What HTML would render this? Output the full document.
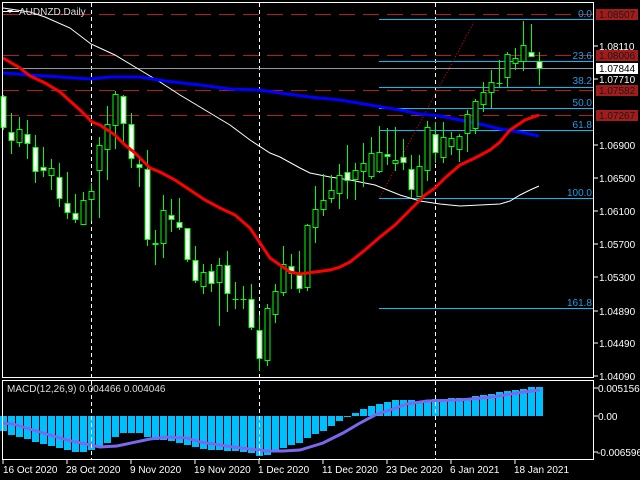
<!DOCTYPE html>
<html><head><meta charset="utf-8"><style>
html,body{margin:0;padding:0;background:#000;width:640px;height:480px;overflow:hidden}
svg{display:block}
text{font-family:"Liberation Sans",sans-serif;font-size:10px}
</style></head><body>
<svg id="s" width="640" height="480" xmlns="http://www.w3.org/2000/svg">
<rect width="640" height="480" fill="#000"/>
<g id="g"></g>
<!-- frames -->
<rect x="2.5" y="2.5" width="591" height="375" fill="none" stroke="#fff"/>
<rect x="2.5" y="380.5" width="591" height="79" fill="none" stroke="#fff"/>
<!-- title -->
<line x1="3" y1="11.5" x2="19" y2="11.5" stroke="#fff"/>
<path d="M7 10 L13 10 L10 13 Z" fill="#fff"/>
<text x="19" y="15" fill="#ddd" font-size="11">AUDNZD.Daily</text>
<!-- fib labels -->
<g fill="#1e9fe6" text-anchor="end" font-size="10">
<text x="592" y="17">0.0</text>
<text x="592" y="59">23.6</text>
<text x="592" y="84">38.2</text>
<text x="592" y="106">50.0</text>
<text x="592" y="128">61.8</text>
<text x="592" y="196">100.0</text>
<text x="592" y="306">161.8</text>
</g>
<!-- axis -->
<g stroke="#fff">
<line x1="594" y1="46" x2="598" y2="46"/><line x1="594" y1="79" x2="598" y2="79"/>
<line x1="594" y1="145" x2="598" y2="145"/><line x1="594" y1="178" x2="598" y2="178"/>
<line x1="594" y1="211" x2="598" y2="211"/><line x1="594" y1="244" x2="598" y2="244"/>
<line x1="594" y1="277" x2="598" y2="277"/><line x1="594" y1="311" x2="598" y2="311"/>
<line x1="594" y1="343" x2="598" y2="343"/><line x1="594" y1="376" x2="598" y2="376"/>
<line x1="594" y1="388" x2="598" y2="388"/><line x1="594" y1="416" x2="598" y2="416"/>
<line x1="594" y1="452" x2="598" y2="452"/>
</g>
<g fill="#fff" font-size="10">
<text x="599" y="50">1.08110</text><text x="599" y="83">1.07710</text>
<text x="599" y="149">1.06900</text><text x="599" y="182">1.06500</text>
<text x="599" y="215">1.06100</text><text x="599" y="248">1.05700</text>
<text x="599" y="281">1.05300</text><text x="599" y="315">1.04890</text>
<text x="599" y="347">1.04490</text><text x="599" y="380">1.04090</text>
<text x="598" y="392">0.005156</text><text x="598" y="420">0.00</text>
<text x="597" y="456">-0.006596</text>
</g>
<g font-size="10">
<rect x="596" y="9" width="42" height="11" fill="#a31c1c"/><text x="599" y="18" fill="#1a1a1a">1.08507</text>
<rect x="596" y="50" width="42" height="11" fill="#a31c1c"/><text x="599" y="59" fill="#1a1a1a">1.08006</text>
<rect x="596" y="63" width="42" height="11" fill="#fff"/><text x="599" y="72" fill="#000">1.07844</text>
<rect x="596" y="85" width="42" height="11" fill="#a31c1c"/><text x="599" y="94" fill="#1a1a1a">1.07582</text>
<rect x="596" y="110" width="42" height="11" fill="#a31c1c"/><text x="599" y="119" fill="#1a1a1a">1.07267</text>
</g>
<!-- date axis -->
<g stroke="#fff">
<line x1="3" y1="460" x2="3" y2="464"/><line x1="67" y1="460" x2="67" y2="464"/>
<line x1="131" y1="460" x2="131" y2="464"/><line x1="195" y1="460" x2="195" y2="464"/>
<line x1="259" y1="460" x2="259" y2="464"/><line x1="323" y1="460" x2="323" y2="464"/>
<line x1="387" y1="460" x2="387" y2="464"/><line x1="451" y1="460" x2="451" y2="464"/>
<line x1="515" y1="460" x2="515" y2="464"/>
</g>
<g fill="#fff" font-size="10">
<text x="3" y="473">16 Oct 2020</text><text x="66" y="473">28 Oct 2020</text>
<text x="130" y="473">9 Nov 2020</text><text x="194" y="473">19 Nov 2020</text>
<text x="258" y="473">1 Dec 2020</text><text x="322" y="473">11 Dec 2020</text>
<text x="386" y="473">23 Dec 2020</text><text x="450" y="473">6 Jan 2021</text>
<text x="514" y="473">18 Jan 2021</text>
</g>
<text x="7" y="392" fill="#ddd" font-size="10">MACD(12,26,9) 0.004466 0.004046</text>
</svg>
<script>
var g=document.getElementById('g'),NS='http://www.w3.org/2000/svg';
function el(t,a){var e=document.createElementNS(NS,t);for(var k in a)e.setAttribute(k,a[k]);g.appendChild(e);return e;}
function pl(pts,c,w,extra){var a={points:pts.map(function(p){return p.join(',')}).join(' '),fill:'none',stroke:c,'stroke-width':w};for(var k in extra)a[k]=extra[k];el('polyline',a);}
// macd histogram
var hb=[431,435,437,439,442,444,446,448,450,452,452,450,446,443,437,433,433,433,437,440,440,441,443,445,447,449,450,450,451,451,452,453,456,455,452,448,445,443,438,434,431,426,421,417,413,409,406,404,402,400,400,400,401,401,399,399,398,398,398,396,395,394,392,391,390,389,387,387];
hb.forEach(function(v,k){var x=Math.round(3.3+8*k)-3;var y0=416;if(v>y0)el('rect',{x:x,y:y0,width:7,height:v-y0,fill:'#00bfff'});else el('rect',{x:x,y:v,width:7,height:y0-v,fill:'#00bfff'});});
pl([[3,423],[13,424],[33,430],[67,440],[100,447],[117,446],[150,439],[167,437],[187,438],[200,442],[233,447],[267,451],[283,451],[300,450],[310,447],[323,443],[343,433],[360,423],[377,414],[393,409],[407,404],[427,401],[460,400],[493,397],[517,393],[540,390]],'#7b68ee',3);
// vertical dashed
[91.5,259.5,435.5].forEach(function(x){el('line',{x1:x,y1:3,x2:x,y2:460,stroke:'#fff','stroke-dasharray':'4,3'});});
// red dashed
[14.5,55.5,90.5,115.5].forEach(function(y){el('line',{x1:3,y1:y,x2:593,y2:y,stroke:'#b01e1e','stroke-dasharray':'16,8'});});
el('line',{x1:3,y1:68.5,x2:593,y2:68.5,stroke:'#8a9aa8'});
[19.5,61.5,87.5,108.5,130.5,198.5,308.5].forEach(function(y){el('line',{x1:379,y1:y,x2:593,y2:y,stroke:'#00bfff'});});
el('line',{x1:380,y1:197,x2:474,y2:22,stroke:'#e00','stroke-dasharray':'1,2'});
// white MA
pl([[3,8],[30,12],[45,17],[70,28],[91,44],[115,55],[140,70],[160,82],[180,95],[205,110],[230,125],[250,140],[270,153],[280,157],[300,168],[310,173],[330,177],[350,180],[375,185],[400,195],[420,201],[440,204],[460,206],[480,205],[500,204],[510,201],[520,195],[530,190],[539,186]],'#fff',1);
// blue MA
pl([[3,73],[30,75],[60,77],[90,79],[110,77],[140,77],[165,81],[200,85],[230,89],[259,90],[280,93],[310,97],[340,100],[370,105],[400,110],[420,114],[440,116],[460,120],[480,124],[500,129],[520,132],[539,136]],'#0000ff',3);
// candles [wt,wb,bt,bb,white]
var C=[[95,130,96,127,1],[113,154,132,140,1],[117,147,129,142,0],[120,159,134,143,1],[135,183,147,171,1],[147,177,167,170,1],[159,190,168,175,0],[163,207,177,198,1],[172,219,203,212,1],[194,223,213,219,1],[192,225,200,224,0],[183,221,191,199,0],[137,218,145,170,0],[106,180,124,149,0],[91,149,94,125,0],[95,143,96,123,1],[113,168,124,158,1],[159,187,164,167,1],[150,246,169,239,1],[230,265,243,244,0],[195,258,210,243,0],[199,232,215,219,1],[198,230,222,227,1],[228,262,228,259,1],[246,283,260,280,1],[264,294,272,286,0],[264,292,271,283,1],[258,326,265,282,0],[251,312,265,293,1],[282,309,299,299,0],[286,309,299,299,0],[284,330,299,327,1],[315,371,330,358,1],[304,366,308,360,0],[284,323,291,314,0],[246,296,264,292,0],[254,289,266,273,1],[251,293,275,288,1],[224,291,225,287,0],[186,243,209,227,0],[174,216,200,209,0],[175,203,190,198,0],[164,209,175,193,0],[145,199,172,180,1],[163,200,170,179,0],[143,187,163,171,0],[137,179,153,176,0],[126,173,152,171,0],[128,165,154,156,1],[127,171,160,163,0],[139,170,157,162,1],[155,198,169,189,1],[155,197,166,196,0],[121,181,127,170,0],[122,163,134,152,1],[122,163,137,157,0],[132,155,138,146,0],[134,162,136,149,0],[110,152,114,133,0],[99,134,101,128,0],[82,112,92,104,0],[70,108,82,92,0],[60,88,83,83,0],[52,87,54,77,0],[48,70,58,63,0],[21,71,45,61,0],[24,57,52,56,1],[52,85,61,68,1]];
C.forEach(function(c,k){var x=Math.round(3.3+8*k)+0.5;
el('line',{x1:x,y1:c[0],x2:x,y2:c[1],stroke:'#00ff00'});
if(c[3]-c[2]<1){el('line',{x1:x-3,y1:c[2]+0.5,x2:x+3,y2:c[2]+0.5,stroke:'#00ff00'});}
else el('rect',{x:x-2.5,y:c[2]+0.5,width:5,height:c[3]-c[2],fill:c[4]?'#fff':'#000',stroke:'#00ff00'});});
// red MA on top
pl([[3,58],[20,68],[30,76],[45,83],[60,92],[80,110],[92,122],[100,125],[115,135],[125,145],[135,153],[150,168],[160,172],[175,180],[190,190],[205,200],[220,208],[235,215],[250,228],[260,243],[270,258],[280,265],[290,272],[300,274],[315,272],[330,270],[340,267],[350,262],[365,250],[380,237],[395,225],[410,210],[425,195],[435,188],[445,178],[460,165],[475,158],[490,150],[500,142],[510,130],[525,120],[539,115]],'#ff0000',3);
</script>
</body></html>
